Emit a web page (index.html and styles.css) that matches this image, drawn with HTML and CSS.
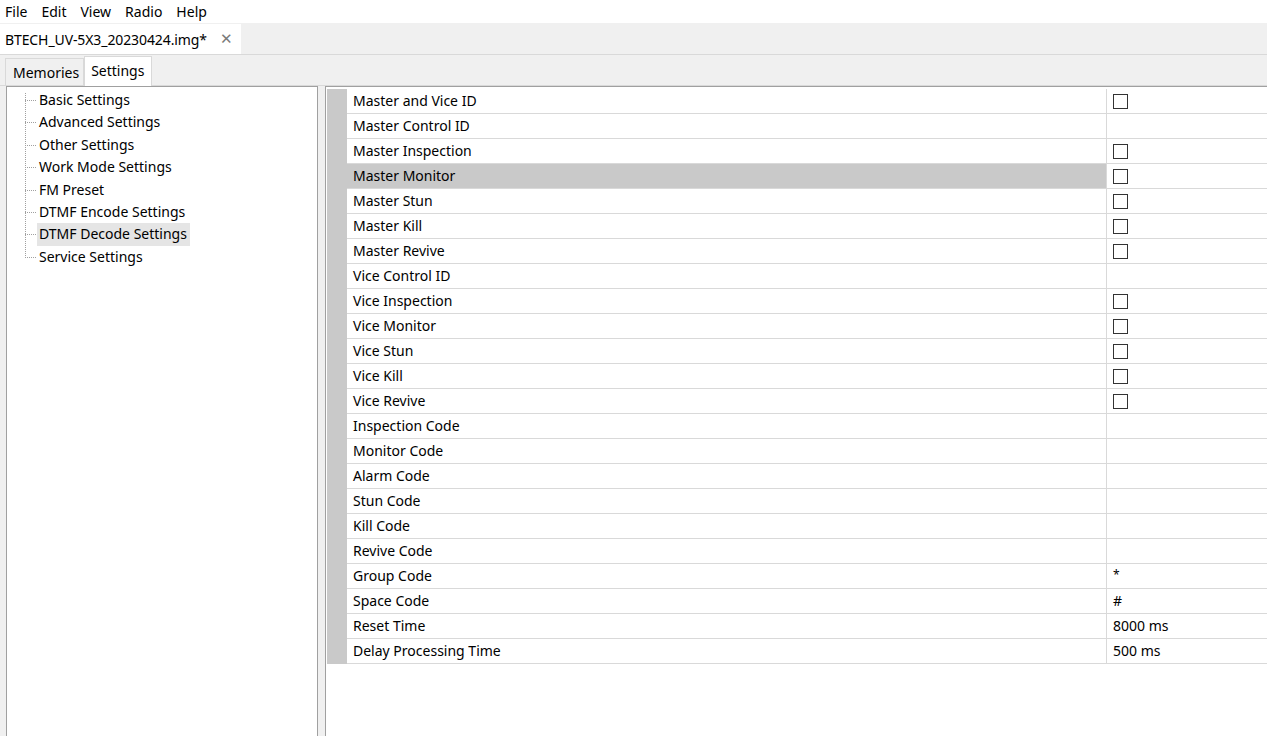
FILE: index.html
```html
<!DOCTYPE html>
<html>
<head>
<meta charset="utf-8">
<link rel="stylesheet" href="styles.css">
</head>
<body>
<div class="menubar">
  <span class="menu">File</span><span class="menu">Edit</span><span class="menu">View</span><span class="menu">Radio</span><span class="menu">Help</span>
</div>
<div class="doctabs">
  <div class="doctab"><span class="doctitle">BTECH_UV-5X3_20230424.img*</span><span class="close">✕</span></div>
</div>
<div class="innertabs">
  <div class="itab">Memories</div>
  <div class="itab active">Settings</div>
</div>
<div class="content">
  <div class="treepanel">
    <ul class="tree">
      <li>Basic Settings</li>
      <li>Advanced Settings</li>
      <li>Other Settings</li>
      <li>Work Mode Settings</li>
      <li>FM Preset</li>
      <li>DTMF Encode Settings</li>
      <li class="sel">DTMF Decode Settings</li>
      <li>Service Settings</li>
    </ul>
  </div>
  <div class="splitter"></div>
  <div class="gridpanel">
    <div class="grid">
      <div class="row"><div class="hdr"></div><div class="lbl">Master and Vice ID</div><div class="val"><span class="cb"></span></div></div>
      <div class="row"><div class="hdr"></div><div class="lbl">Master Control ID</div><div class="val"></div></div>
      <div class="row"><div class="hdr"></div><div class="lbl">Master Inspection</div><div class="val"><span class="cb"></span></div></div>
      <div class="row selrow"><div class="hdr"></div><div class="lbl">Master Monitor</div><div class="val"><span class="cb"></span></div></div>
      <div class="row"><div class="hdr"></div><div class="lbl">Master Stun</div><div class="val"><span class="cb"></span></div></div>
      <div class="row"><div class="hdr"></div><div class="lbl">Master Kill</div><div class="val"><span class="cb"></span></div></div>
      <div class="row"><div class="hdr"></div><div class="lbl">Master Revive</div><div class="val"><span class="cb"></span></div></div>
      <div class="row"><div class="hdr"></div><div class="lbl">Vice Control ID</div><div class="val"></div></div>
      <div class="row"><div class="hdr"></div><div class="lbl">Vice Inspection</div><div class="val"><span class="cb"></span></div></div>
      <div class="row"><div class="hdr"></div><div class="lbl">Vice Monitor</div><div class="val"><span class="cb"></span></div></div>
      <div class="row"><div class="hdr"></div><div class="lbl">Vice Stun</div><div class="val"><span class="cb"></span></div></div>
      <div class="row"><div class="hdr"></div><div class="lbl">Vice Kill</div><div class="val"><span class="cb"></span></div></div>
      <div class="row"><div class="hdr"></div><div class="lbl">Vice Revive</div><div class="val"><span class="cb"></span></div></div>
      <div class="row"><div class="hdr"></div><div class="lbl">Inspection Code</div><div class="val"></div></div>
      <div class="row"><div class="hdr"></div><div class="lbl">Monitor Code</div><div class="val"></div></div>
      <div class="row"><div class="hdr"></div><div class="lbl">Alarm Code</div><div class="val"></div></div>
      <div class="row"><div class="hdr"></div><div class="lbl">Stun Code</div><div class="val"></div></div>
      <div class="row"><div class="hdr"></div><div class="lbl">Kill Code</div><div class="val"></div></div>
      <div class="row"><div class="hdr"></div><div class="lbl">Revive Code</div><div class="val"></div></div>
      <div class="row"><div class="hdr"></div><div class="lbl">Group Code</div><div class="val"><span class="star">*</span></div></div>
      <div class="row"><div class="hdr"></div><div class="lbl">Space Code</div><div class="val">#</div></div>
      <div class="row"><div class="hdr"></div><div class="lbl">Reset Time</div><div class="val">8000 ms</div></div>
      <div class="row"><div class="hdr"></div><div class="lbl">Delay Processing Time</div><div class="val">500 ms</div></div>
    </div>
  </div>
</div>
</body>
</html>
```
FILE: styles.css
```css
html, body {
  margin: 0;
  padding: 0;
  height: 100%;
  overflow: hidden;
}
body {
  font-family: "Noto Sans", "Open Sans", sans-serif;
  font-size: 14px;
  color: #000;
  background: #f0f0f0;
  display: flex;
  flex-direction: column;
}
.menubar {
  height: 23px;
  background: #fff;
  display: flex;
  align-items: center;
  padding-left: 5px;
}
.menu {
  margin-right: 14px;
  line-height: 23px;
}
.doctabs {
  height: 31px;
  background: #f0f0f0;
  border-bottom: 1px solid #d9d9d9;
  display: flex;
  align-items: flex-end;
}
.doctab {
  height: 30px;
  width: 241px;
  background: #fff;
  display: flex;
  align-items: center;
  padding-left: 5px;
  box-sizing: border-box;
}
.doctitle {
  flex: none;
  letter-spacing: -0.1px;
}
.close {
  margin-left: 13px;
  color: #7a7a7a;
  font-size: 15px;
  font-weight: bold;
  font-family: "DejaVu Sans", sans-serif;
}
.innertabs {
  height: 31px;
  display: flex;
  align-items: flex-end;
  padding-left: 5px;
  border-bottom: 1px solid #d9d9d9;
  box-sizing: border-box;
}
.itab {
  height: 27px;
  padding: 0 4px 0 7px;
  border: 1px solid #d9d9d9;
  border-bottom: none;
  display: flex;
  align-items: center;
  box-sizing: border-box;
  background: #f0f0f0;
}
.itab.active {
  height: 30px;
  background: #fff;
  margin-bottom: -1px;
  padding: 0 7px 3px 6px;
}
.content {
  flex: 1;
  display: flex;
  padding-left: 6px;
  min-height: 0;
}
.treepanel {
  width: 312px;
  background: #fff;
  border: 1px solid #a0a0a0;
  border-bottom: none;
  box-sizing: border-box;
  padding-top: 2px;
}
.splitter {
  width: 7px;
}
.gridpanel {
  flex: 1;
  background: #fff;
  border: 1px solid #a0a0a0;
  border-right: none;
  border-bottom: none;
  padding: 1px 0 0 1px;
}
.tree {
  list-style: none;
  margin: 0 0 0 18px;
  padding: 0;
  position: relative;
}
.tree::before {
  content: "";
  position: absolute;
  left: 0;
  top: 4px;
  height: 165px;
  border-left: 1px dotted #a0a0a0;
}
.tree li {
  height: 22.4px;
  line-height: 22px;
  padding-left: 14px;
  position: relative;
}
.tree li::before {
  content: "";
  position: absolute;
  left: 0;
  top: 11px;
  width: 11px;
  border-top: 1px dotted #a0a0a0;
}
.tree li.sel {
  display: inline-block;
  background: #e5e5e5;
  padding-left: 2px;
  padding-right: 3px;
  margin-left: 12px;
}
.tree li.sel::before {
  left: -12px;
}
.grid {
  display: flex;
  flex-direction: column;
}
.row {
  display: flex;
  height: 25px;
  box-sizing: border-box;
  border-bottom: 1px solid #d9d9d9;
}
.row:first-child {
  height: 26px;
  padding-top: 1px;
}
.hdr {
  width: 20px;
  flex: none;
  background: #c9c9c9;
  margin-bottom: -1px;
}
.lbl {
  width: 753px;
  flex: none;
  padding-left: 6px;
  line-height: 24px;
  border-right: 1px solid #d9d9d9;
}
.selrow .lbl {
  background: #c9c9c9;
}
.val {
  flex: 1;
  padding-left: 6px;
  line-height: 24px;
  display: flex;
  align-items: center;
}
.cb {
  width: 15px;
  height: 15px;
  border: 1px solid #333;
  box-sizing: border-box;
  background: #fff;
}
.star {
  font-size: 12px;
  line-height: 12px;
  align-self: flex-start;
  margin-top: 5px;
}
```
